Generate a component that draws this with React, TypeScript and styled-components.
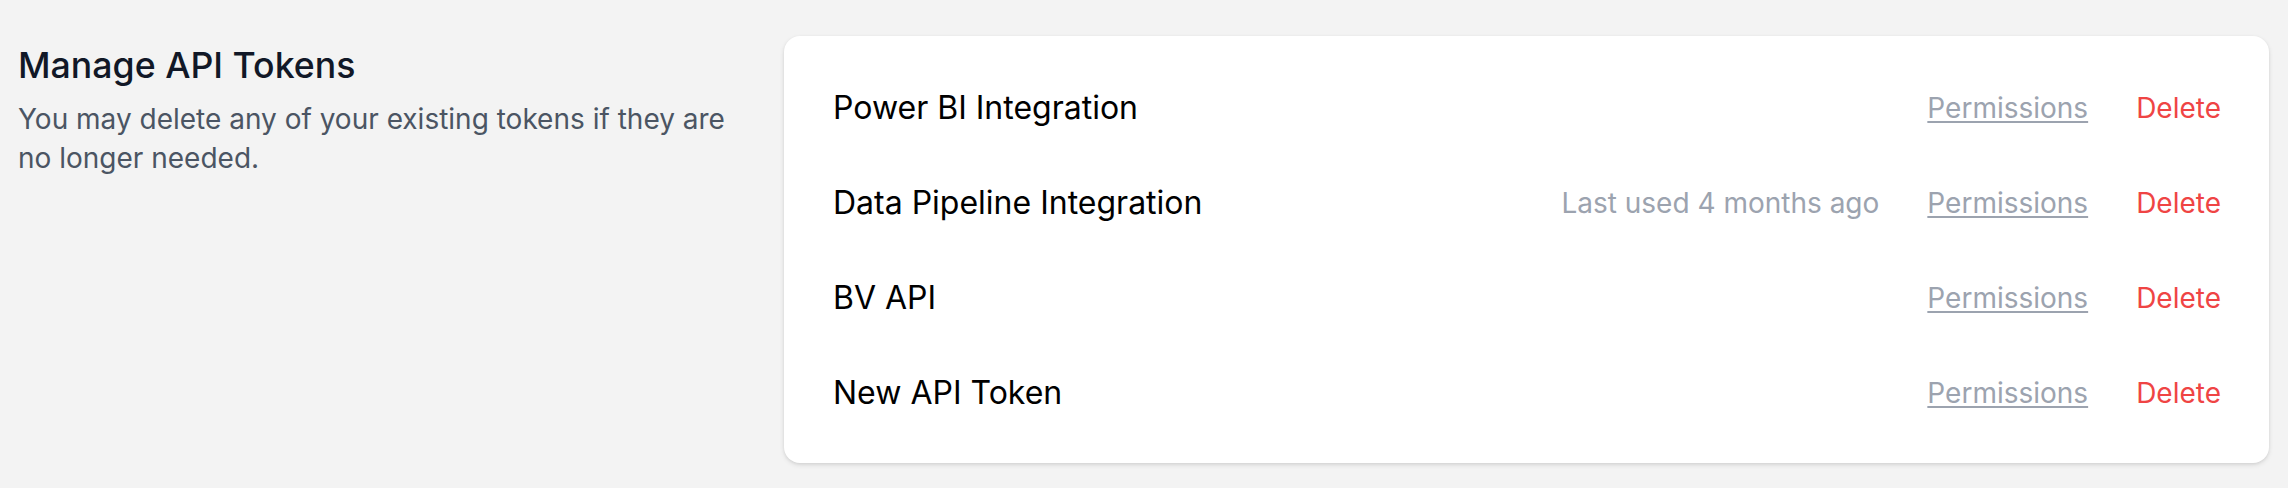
import React from 'react';
import styled, { createGlobalStyle } from 'styled-components';

const GlobalStyle = createGlobalStyle`
	body {
		margin: 0;
		background-color: #f3f3f3;
		font-family: Inter, 'Noto Sans', sans-serif;
	}
`;

const S = {
	Page: styled.div`
		display: grid;
		grid-template-columns: 730px 1fr;
		column-gap: 36px;
		align-items: start;
		padding: 36px 19px 24px 18px;
	`,

	Intro: styled.div`
		display: flex;
		flex-direction: column;
	`,

	Heading: styled.h3`
		margin: 0;
		font-size: 35.7px;
		line-height: 58px;
		font-weight: 500;
		color: #111827;
	`,

	Description: styled.p`
		margin: 6px 0 0;
		font-size: 28px;
		line-height: 38.5px;
		color: #4b5563;
	`,

	Card: styled.div`
		display: flex;
		flex-direction: column;
		gap: 49px;
		padding: 49px 48px 47px 49px;
		background-color: #ffffff;
		border-radius: 16px;
		box-shadow: 0 2px 5px rgba(0, 0, 0, 0.1), 0 1px 3px rgba(0, 0, 0, 0.06);
	`,

	Row: styled.div`
		display: flex;
		align-items: center;
		justify-content: space-between;
	`,

	Name: styled.div`
		font-size: 32px;
		line-height: 46px;
		color: #000000;
	`,

	Actions: styled.div`
		display: flex;
		align-items: center;
	`,

	LastUsed: styled.div`
		font-size: 28px;
		color: #9ca3af;
	`,

	Action: styled.button<{ $danger?: boolean }>`
		margin-left: 48px;
		padding: 0;
		border: 0;
		background: none;
		font-family: inherit;
		font-size: 28px;
		cursor: pointer;
		color: ${(p) => (p.$danger ? '#ef4444' : '#9ca3af')};
		text-decoration: ${(p) => (p.$danger ? 'none' : 'underline')};
		text-decoration-thickness: 2px;
		text-underline-offset: 3px;
	`,
};

const tokens = [
	{ name: 'Power BI Integration', lastUsed: '' },
	{ name: 'Data Pipeline Integration', lastUsed: 'Last used 4 months ago' },
	{ name: 'BV API', lastUsed: '' },
	{ name: 'New API Token', lastUsed: '' },
];

function App() {
	return (
		<>
			<GlobalStyle />
			<S.Page>
				<S.Intro>
					<S.Heading>Manage API Tokens</S.Heading>
					<S.Description>
						You may delete any of your existing tokens if they are no longer needed.
					</S.Description>
				</S.Intro>
				<S.Card>
					{tokens.map((token) => (
						<S.Row key={token.name}>
							<S.Name>{token.name}</S.Name>
							<S.Actions>
								{token.lastUsed && <S.LastUsed>{token.lastUsed}</S.LastUsed>}
								<S.Action>Permissions</S.Action>
								<S.Action $danger>Delete</S.Action>
							</S.Actions>
						</S.Row>
					))}
				</S.Card>
			</S.Page>
		</>
	);
}

export default App;
